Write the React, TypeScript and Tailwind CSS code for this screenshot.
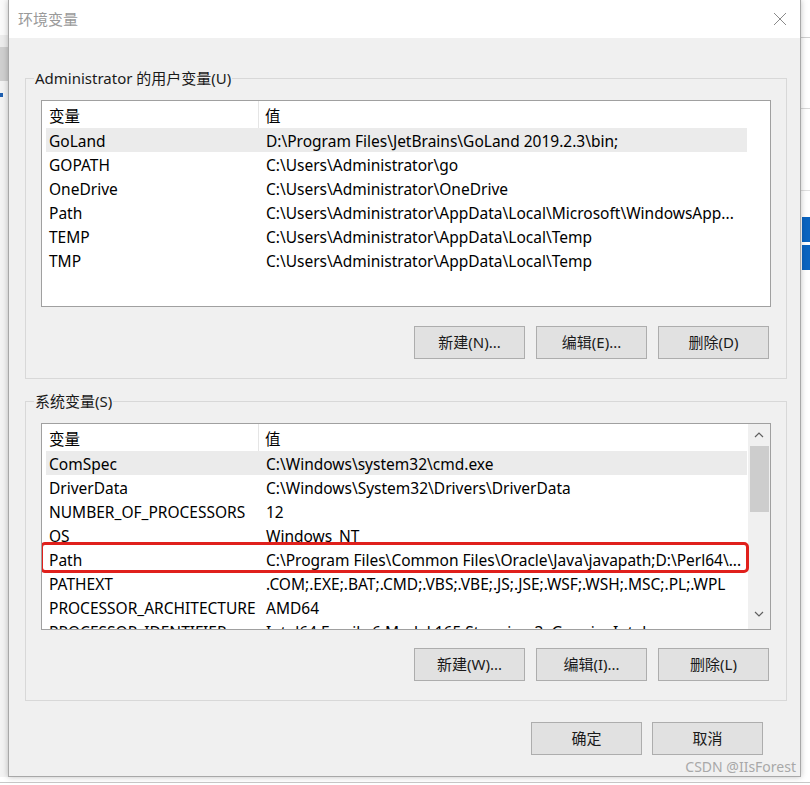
import React from "react";

const FONT = { fontFamily: '"Noto Sans", "Noto Sans CJK SC", sans-serif' };

type Row = [string, string];

const userRows: Row[] = [
  ["GoLand", "D:\\Program Files\\JetBrains\\GoLand 2019.2.3\\bin;"],
  ["GOPATH", "C:\\Users\\Administrator\\go"],
  ["OneDrive", "C:\\Users\\Administrator\\OneDrive"],
  ["Path", "C:\\Users\\Administrator\\AppData\\Local\\Microsoft\\WindowsApp..."],
  ["TEMP", "C:\\Users\\Administrator\\AppData\\Local\\Temp"],
  ["TMP", "C:\\Users\\Administrator\\AppData\\Local\\Temp"],
];

const sysRows: Row[] = [
  ["ComSpec", "C:\\Windows\\system32\\cmd.exe"],
  ["DriverData", "C:\\Windows\\System32\\Drivers\\DriverData"],
  ["NUMBER_OF_PROCESSORS", "12"],
  ["OS", "Windows_NT"],
  ["Path", "C:\\Program Files\\Common Files\\Oracle\\Java\\javapath;D:\\Perl64\\..."],
  ["PATHEXT", ".COM;.EXE;.BAT;.CMD;.VBS;.VBE;.JS;.JSE;.WSF;.WSH;.MSC;.PL;.WPL"],
  ["PROCESSOR_ARCHITECTURE", "AMD64"],
  ["PROCESSOR_IDENTIFIER", "Intel64 Family 6 Model 165 Stepping 3, GenuineIntel"],
];

function Btn({ label }: { label: string }) {
  return (
    <div className="w-[111px] h-[33px] border border-[#adadad] bg-[#e1e1e1] flex items-center justify-center text-[15px] text-[#1a1a1a]">
      {label}
    </div>
  );
}

function List({ rows, scroll, redIndex }: { rows: Row[]; scroll?: boolean; redIndex?: number }) {
  return (
    <div className="relative w-[730px] h-[207px] border border-[#a0a0a0] bg-white flex overflow-hidden text-[15.5px]">
      <div className="w-[705px] pl-[4px] flex flex-col">
        <div className="flex h-[27px] shrink-0 items-center">
          <div className="w-[213px] h-full pl-[3px] pt-[5px] flex items-center border-r border-[#e5e5e5]">变量</div>
          <div className="flex-1 h-full pl-[6px] pt-[5px] flex items-center">值</div>
        </div>
        {rows.map((r, i) => (
          <div
            key={i}
            className={
              "flex h-[24px] shrink-0 items-center pt-[4px] whitespace-nowrap " +
              (i === 0 ? "bg-[#ebebeb]" : "")
            }
          >
            <div className="w-[213px] pl-[3px] overflow-hidden">{r[0]}</div>
            <div className="flex-1 pl-[7px] overflow-hidden">{r[1]}</div>
          </div>
        ))}
      </div>
      {scroll && (
        <div className="flex-1 ml-[1px] bg-[#f0f0f0] flex flex-col items-center">
          <div className="h-[22px] flex items-center justify-center">
            <svg width="10" height="6" viewBox="0 0 10 6">
              <path d="M1 5 L5 1 L9 5" fill="none" stroke="#606060" strokeWidth="1.2" />
            </svg>
          </div>
          <div className="w-[19px] h-[66px] bg-[#cdcdcd]" />
          <div className="flex-1" />
          <div className="h-[22px] mb-[4px] flex items-center justify-center">
            <svg width="10" height="6" viewBox="0 0 10 6">
              <path d="M1 1 L5 5 L9 1" fill="none" stroke="#606060" strokeWidth="1.2" />
            </svg>
          </div>
        </div>
      )}
      {redIndex !== undefined && (
        <div
          className="absolute left-[-2px] w-[709px] h-[31px] border-[3px] border-[#e0201c] rounded-[5px]"
          style={{ top: 27 + redIndex * 24 - 5 }}
        />
      )}
    </div>
  );
}

function Group({ label, children }: { label: string; children: React.ReactNode }) {
  return (
    <div className="relative w-[762px] border border-[#d8d8d8] pt-[21px] pl-[15px] pr-[16px] pb-[19px]">
      <div className="absolute left-[8px] top-[-11px] px-[1px] bg-[#f0f0f0] text-[15px] leading-[20px] text-[#1a1a1a]">
        {label}
      </div>
      {children}
    </div>
  );
}

export default function App() {
  return (
    <div className="w-[810px] h-[785px] bg-white overflow-hidden text-[15px] text-black" style={FONT}>
      <div className="flex h-[777px]">
        {/* left background strip */}
        <div className="w-[8px] flex flex-col bg-[#f3f3f3]">
          <div className="h-[35px] bg-[#fafafa]" />
          <div className="h-[12px] bg-[#ececec]" />
          <div className="h-[34px] bg-[#cfcfcf]" />
          <div className="h-[12px]" />
          <div className="h-[4px] w-[3px] bg-[#1f5fb0]" />
          <div className="flex-1" />
        </div>

        {/* dialog window */}
        <div className="w-[793px] h-[777px] border-l border-r border-b border-[#a8a8a8] bg-[#f0f0f0] flex flex-col shadow-[0_0_6px_rgba(0,0,0,0.25)] relative">
          <div className="h-[38px] shrink-0 bg-white flex items-center justify-between pl-[9px] pr-[13px]">
            <span className="text-[15px] text-[#9a9a9a]">环境变量</span>
            <svg width="14" height="14" viewBox="0 0 14 14">
              <path d="M1 1 L13 13 M13 1 L1 13" stroke="#8a8a8a" strokeWidth="1" fill="none" />
            </svg>
          </div>

          <div className="flex flex-col pl-[16px] pt-[40px]">
            <Group label="Administrator 的用户变量(U)">
              <List rows={userRows} />
              <div className="flex justify-end gap-[11px] mt-[19px] pr-[1px]">
                <Btn label="新建(N)..." />
                <Btn label="编辑(E)..." />
                <Btn label="删除(D)" />
              </div>
            </Group>

            <div className="h-[22px]" />

            <Group label="系统变量(S)">
              <List rows={sysRows} scroll redIndex={4} />
              <div className="flex justify-end gap-[11px] mt-[18px] pr-[1px]">
                <Btn label="新建(W)..." />
                <Btn label="编辑(I)..." />
                <Btn label="删除(L)" />
              </div>
            </Group>

            <div className="flex justify-end gap-[10px] mt-[21px] pr-[37px]">
              <Btn label="确定" />
              <Btn label="取消" />
            </div>
          </div>

          <div className="absolute right-[4px] bottom-[0px] text-[14px] leading-[18px] text-[#a8a8a8]">
            CSDN @IIsForest
          </div>
        </div>

        {/* right background strip */}
        <div className="flex-1 flex flex-col bg-white">
          <div className="h-[37px]" />
          <div className="h-[1px] bg-[#d0d0d0]" />
          <div className="h-[70px]" />
          <div className="h-[1px] bg-[#d8d8d8]" />
          <div className="h-[81px]" />
          <div className="h-[1px] bg-[#e0e0e0]" />
          <div className="h-[26px]" />
          <div className="h-[25px] ml-[1px] bg-[#0a64c0]" />
          <div className="h-[3px]" />
          <div className="h-[25px] ml-[1px] bg-[#0a64c0]" />
          <div className="flex-1" />
        </div>
      </div>
      <div className="h-[8px] flex flex-col bg-white">
        <div className="h-[5px]" />
        <div className="h-[1px] bg-[#c8c8c8]" />
      </div>
    </div>
  );
}
